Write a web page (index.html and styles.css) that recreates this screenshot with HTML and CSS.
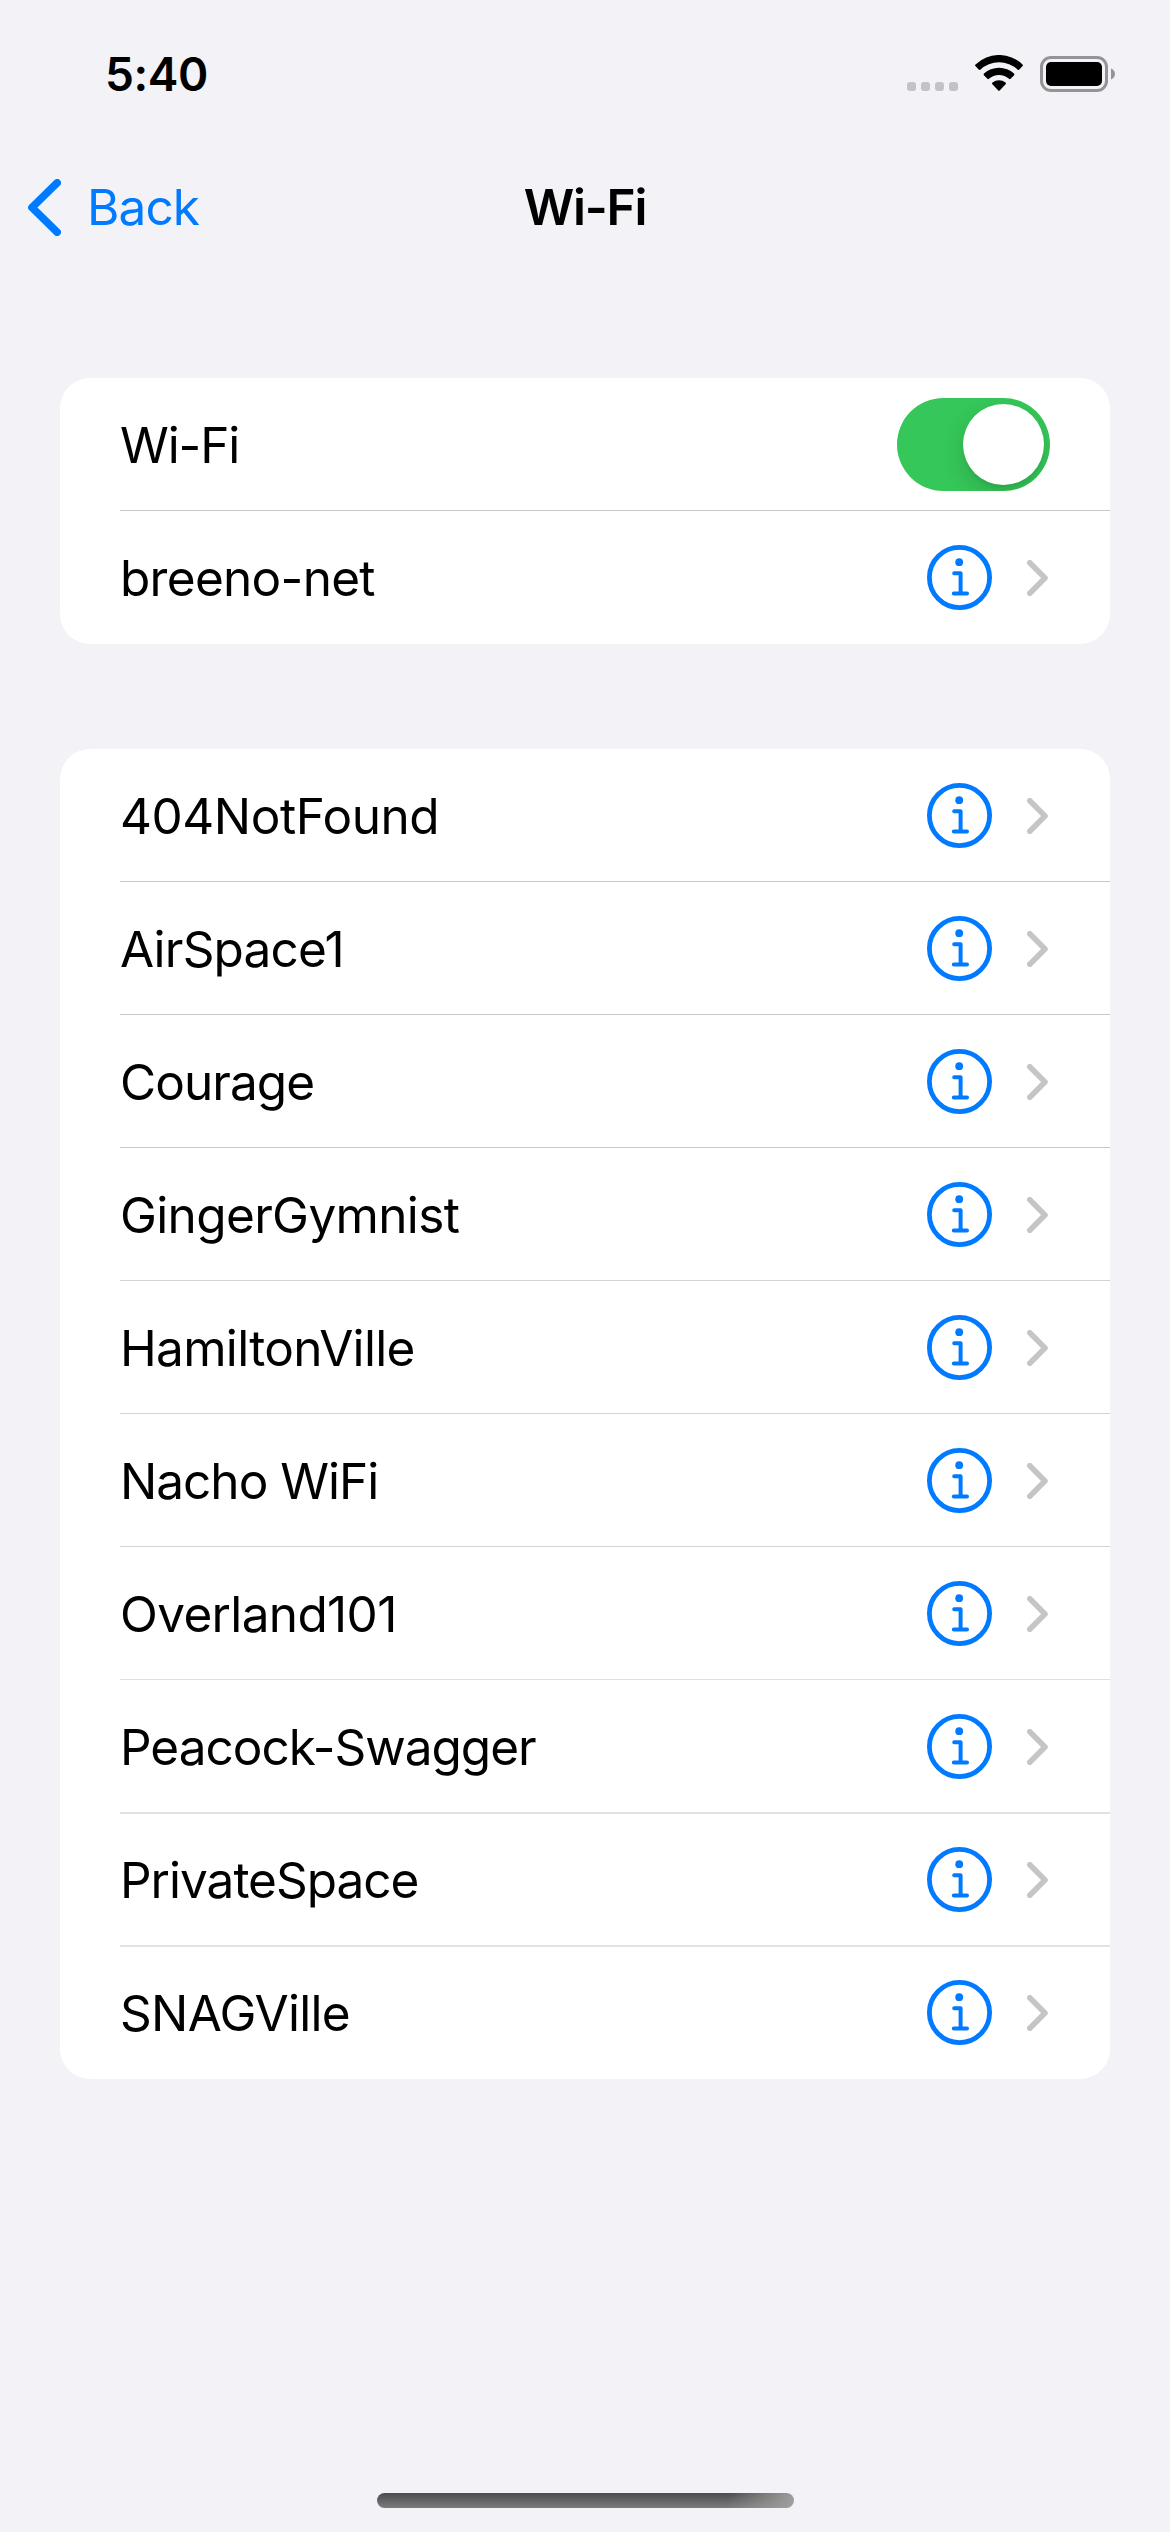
FILE: index.html
```html
<!DOCTYPE html>
<html lang="en">
<head>
<meta charset="utf-8">
<title>Wi-Fi</title>
<link rel="stylesheet" href="styles.css">
</head>
<body>
<svg class="defs" width="0" height="0" aria-hidden="true">
  <symbol id="info" viewBox="0 0 65 65">
    <circle cx="32.5" cy="32.5" r="30.1" fill="none" stroke="currentColor" stroke-width="4.8"/>
    <circle cx="32.2" cy="17.2" r="3.9" fill="currentColor"/>
    <path d="M27.2 28.3H33.6V48.3M26.8 48.5H40" fill="none" stroke="currentColor" stroke-width="4" stroke-linecap="round" stroke-linejoin="round"/>
  </symbol>
  <symbol id="chevron" viewBox="0 0 21 36">
    <path d="M2.8 2.8L18 18L2.8 33.2" fill="none" stroke="currentColor" stroke-width="5.6" stroke-linecap="round" stroke-linejoin="round"/>
  </symbol>
</svg>
<header class="status">
  <span class="time">5:40</span>
  <div class="indicators">
    <div class="signal"><i></i><i></i><i></i><i></i></div>
    <svg class="wifi" viewBox="0 0 48 36">
      <path d="M0.5 9.4A34 34 0 0 1 47.5 9.4Q48.3 10.2 47.6 11L44.3 14.6Q43.6 15.4 42.8 14.7A27.6 27.6 0 0 0 5.2 14.7Q4.4 15.4 3.7 14.6L0.4 11Q-0.3 10.2 0.5 9.4Z"/>
      <path d="M9 18.6A21.9 21.9 0 0 1 39 18.6Q39.8 19.4 39.1 20.2L35.6 23.8Q34.9 24.5 34.1 23.8A15 15 0 0 0 13.9 23.8Q13.1 24.5 12.4 23.8L8.9 20.2Q8.2 19.4 9 18.6Z"/>
      <path d="M17.5 27.6A10.2 10.2 0 0 1 30.5 27.6Q31.4 28.4 30.6 29.2L24.7 35.4Q24 36.1 23.3 35.4L17.4 29.2Q16.6 28.4 17.5 27.6Z"/>
    </svg>
    <svg class="battery" viewBox="0 0 75 36">
      <rect x="1.5" y="1.5" width="65" height="33" rx="9.5" fill="none" stroke="#949397" stroke-width="3"/>
      <rect x="6" y="6" width="56" height="24" rx="5"/>
      <path d="M71 12.5C76.3 14.5 76.3 21.5 71 23.5Z" fill="#949397"/>
    </svg>
  </div>
</header>
<nav class="navbar">
  <a class="back"><svg viewBox="0 0 33 57"><path d="M29.2 3.8L4 28.5L29.2 53.2" fill="none" stroke="currentColor" stroke-width="7.6" stroke-linecap="round" stroke-linejoin="round"/></svg><span>Back</span></a>
  <h1>Wi-Fi</h1>
</nav>
<main>
  <section class="card">
    <div class="row"><span class="name n-wifi">Wi-Fi</span><div class="toggle"><div class="knob"></div></div></div>
    <div class="row"><span class="name n-breeno">breeno-net</span><svg class="info"><use href="#info"/></svg><svg class="chev"><use href="#chevron"/></svg></div>
  </section>
  <section class="card">
    <div class="row"><span class="name n-404">404NotFound</span><svg class="info"><use href="#info"/></svg><svg class="chev"><use href="#chevron"/></svg></div>
    <div class="row"><span class="name n-air">AirSpace1</span><svg class="info"><use href="#info"/></svg><svg class="chev"><use href="#chevron"/></svg></div>
    <div class="row"><span class="name n-courage">Courage</span><svg class="info"><use href="#info"/></svg><svg class="chev"><use href="#chevron"/></svg></div>
    <div class="row light"><span class="name n-ginger">GingerGymnist</span><svg class="info"><use href="#info"/></svg><svg class="chev"><use href="#chevron"/></svg></div>
    <div class="row light"><span class="name n-hamilton">HamiltonVille</span><svg class="info"><use href="#info"/></svg><svg class="chev"><use href="#chevron"/></svg></div>
    <div class="row light"><span class="name n-nacho">Nacho WiFi</span><svg class="info"><use href="#info"/></svg><svg class="chev"><use href="#chevron"/></svg></div>
    <div class="row faint"><span class="name n-overland">Overland101</span><svg class="info"><use href="#info"/></svg><svg class="chev"><use href="#chevron"/></svg></div>
    <div class="row soft"><span class="name n-peacock">Peacock-Swagger</span><svg class="info"><use href="#info"/></svg><svg class="chev"><use href="#chevron"/></svg></div>
    <div class="row soft"><span class="name n-private">PrivateSpace</span><svg class="info"><use href="#info"/></svg><svg class="chev"><use href="#chevron"/></svg></div>
    <div class="row"><span class="name n-snag">SNAGVille</span><svg class="info"><use href="#info"/></svg><svg class="chev"><use href="#chevron"/></svg></div>
  </section>
</main>
<footer><div class="home"></div></footer>
</body>
</html>
```
FILE: styles.css
```css
* { box-sizing: border-box; }
body {
  margin: 0;
  width: 1170px;
  height: 2532px;
  display: flex;
  flex-direction: column;
  background: #f2f2f7;
  color: #000;
  font-family: Inter, "Liberation Sans", sans-serif;
  font-size: 49.5px;
  overflow: hidden;
}
svg { display: block; flex: none; }
.defs { position: absolute; }
.status {
  height: 141px;
  padding: 6px 55px 0 105px;
  display: flex;
  justify-content: space-between;
  align-items: center;
}
.time { font-size: 46px; font-weight: 600; letter-spacing: -0.4px; }
.indicators { display: flex; align-items: flex-end; height: 37px; }
.signal { display: flex; gap: 5px; padding-bottom: 1px; margin-right: 17px; }
.signal i { width: 9px; height: 9px; border-radius: 3px; background: #c3c2c7; }
.wifi { width: 48px; height: 36px; margin: 0 17px 1px 0; }
.battery { width: 75px; height: 36px; }
.navbar {
  height: 132px;
  display: grid;
  grid-template-columns: 1fr auto 1fr;
  align-items: center;
  padding: 0 28px;
}
.back { display: flex; align-items: center; gap: 26px; color: #007aff; letter-spacing: -0.9px; }
.back svg { width: 33px; height: 57px; }
h1 { margin: 0; font-size: 49.5px; font-weight: 600; letter-spacing: -1.2px; }
main { padding: 105px 60px 0; display: flex; flex-direction: column; gap: 105px; flex: 1; }
.card { background: #fff; border-radius: 30px; overflow: hidden; }
.row {
  height: 133px;
  margin-left: 60px;
  padding: 1px 60px 0 0;
  display: flex;
  align-items: center;
  border-bottom: 1px solid #c8c8ca;
}
.row.light { border-bottom-color: #d3d3d5; }
.row.faint { border-bottom-color: #dfdfe0; }
.row.soft { box-shadow: 0 1px #e2e2e3; border-bottom-color: #e2e2e3; }
.row:last-child { border-bottom-color: transparent; }
.name { flex: 1; padding-top: 1px; white-space: nowrap; }
.n-wifi { letter-spacing: -1.1px; }
.n-breeno { letter-spacing: -0.7px; }
.n-404 { letter-spacing: -0.45px; }
.n-air { letter-spacing: -0.8px; }
.n-courage { letter-spacing: -0.95px; }
.n-ginger { letter-spacing: -0.65px; }
.n-hamilton { letter-spacing: -0.7px; }
.n-nacho { letter-spacing: -1px; }
.n-overland { letter-spacing: -0.65px; }
.n-peacock { letter-spacing: -1px; }
.n-private { letter-spacing: -1px; }
.n-snag { letter-spacing: -0.7px; }
.toggle { width: 153px; height: 93px; border-radius: 47px; background: #35c759; padding: 6px; display: flex; justify-content: flex-end; overflow: hidden; }
.knob { width: 81px; height: 81px; border-radius: 50%; background: #fff; box-shadow: 0 9px 24px rgba(0,0,0,.15), 0 3px 3px rgba(0,0,0,.06); }
.info { width: 65px; height: 65px; color: #007aff; margin-right: 35px; }
.chev { width: 21px; height: 36px; color: #c5c5c7; margin-right: 2px; }
footer { height: 47px; display: flex; justify-content: center; padding-top: 8px; }
.home { width: 417px; height: 15px; border-radius: 8px; background: linear-gradient(100deg, transparent 84%, #a0a0a0), linear-gradient(#4c4c4e, #7c7c7e); }
```
